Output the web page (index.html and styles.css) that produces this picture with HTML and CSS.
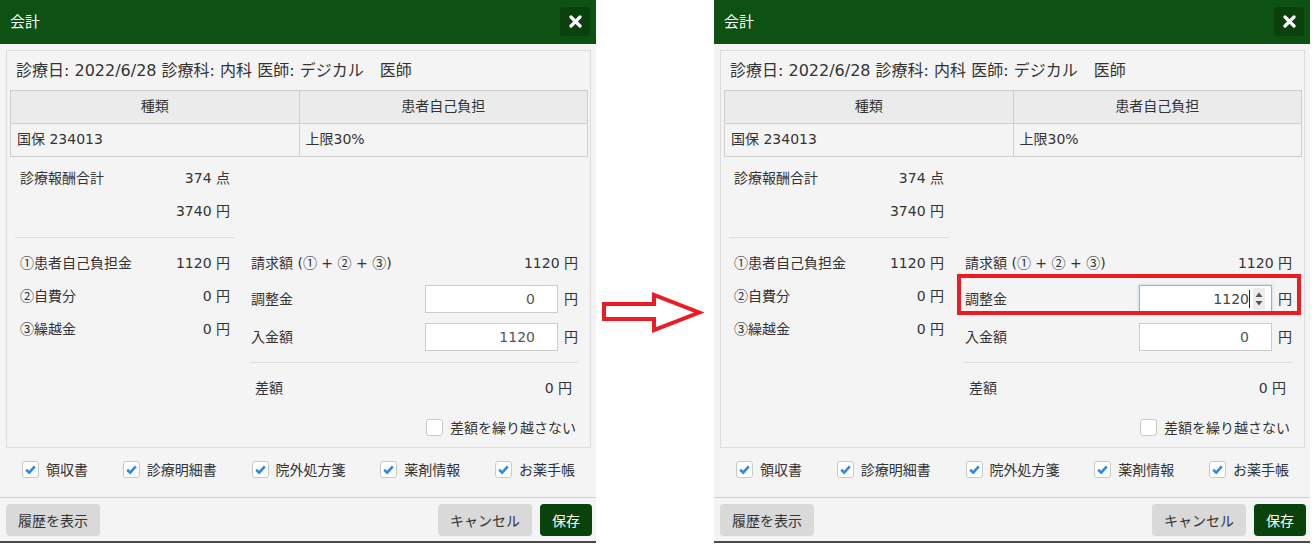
FILE: index.html
```html
<!DOCTYPE html>
<html>
<head>
    <title>会計</title>
    <link rel="stylesheet" href="styles.css">
</head>
<body>
    <div class="page">
        <div class="dialog">
            <div class="dialog-header">
                <span class="dialog-title">会計</span>
                <span class="close-btn"><svg width="13" height="13" viewBox="0 0 13 13"><path d="M2 2 L11 11 M11 2 L2 11" stroke="#fff" stroke-width="3.2" stroke-linecap="round"/></svg></span>
            </div>
            <div class="dialog-body">
                <div class="visit-info">診療日: 2022/6/28 診療科: 内科 医師: デジカル　医師</div>
                <table class="insurance">
                    <tr><th>種類</th><th>患者自己負担</th></tr>
                    <tr><td>国保 234013</td><td>上限30%</td></tr>
                </table>
                <div class="summary">
                    <div class="summary-left">
                        <div class="row"><span>診療報酬合計</span><span>374 点</span></div>
                        <div class="row"><span></span><span>3740 円</span></div>
                        <div class="divider"></div>
                        <div class="row"><span><span class="circ">①</span>患者自己負担金</span><span>1120 円</span></div>
                        <div class="row"><span><span class="circ">②</span>自費分</span><span>0 円</span></div>
                        <div class="row"><span><span class="circ">③</span>繰越金</span><span>0 円</span></div>
                    </div>
                    <div class="summary-right">
                        <div class="row"><span>請求額 (<span class="circ">①</span> + <span class="circ">②</span> + <span class="circ">③</span>)</span><span>1120 円</span></div>
                        <div class="row row-input"><span>調整金</span><span class="amount"><span class="field"><input class="num" type="text" value="0"></span><span class="unit">円</span></span></div>
                        <div class="row row-input2"><span>入金額</span><span class="amount"><span class="field"><input class="num" type="text" value="1120"></span><span class="unit">円</span></span></div>
                        <div class="divider wide"></div>
                        <div class="row diff"><span>差額</span><span>0 円</span></div>
                        <div class="carry"><span class="check"></span><span>差額を繰り越さない</span></div>
                    </div>
                </div>
            </div>
            <div class="print-options">
                <label class="opt"><span class="check checked"><svg width="17" height="17" viewBox="0 0 17 17"><path d="M4.2 8.8 L7.2 11.6 L12.8 5.4" fill="none" stroke="#2e8ae6" stroke-width="2.6"/></svg></span>領収書</label>
                <label class="opt"><span class="check checked"><svg width="17" height="17" viewBox="0 0 17 17"><path d="M4.2 8.8 L7.2 11.6 L12.8 5.4" fill="none" stroke="#2e8ae6" stroke-width="2.6"/></svg></span>診療明細書</label>
                <label class="opt"><span class="check checked"><svg width="17" height="17" viewBox="0 0 17 17"><path d="M4.2 8.8 L7.2 11.6 L12.8 5.4" fill="none" stroke="#2e8ae6" stroke-width="2.6"/></svg></span>院外処方箋</label>
                <label class="opt"><span class="check checked"><svg width="17" height="17" viewBox="0 0 17 17"><path d="M4.2 8.8 L7.2 11.6 L12.8 5.4" fill="none" stroke="#2e8ae6" stroke-width="2.6"/></svg></span>薬剤情報</label>
                <label class="opt"><span class="check checked"><svg width="17" height="17" viewBox="0 0 17 17"><path d="M4.2 8.8 L7.2 11.6 L12.8 5.4" fill="none" stroke="#2e8ae6" stroke-width="2.6"/></svg></span>お薬手帳</label>
            </div>
            <div class="dialog-footer">
                <button class="btn btn-gray">履歴を表示</button>
                <span class="spacer"></span>
                <button class="btn btn-gray">キャンセル</button>
                <button class="btn btn-save">保存</button>
            </div>
        </div>

        <div class="arrow-gap">
            <svg width="104" height="46" viewBox="600 290 104 46"><polygon points="604,304 654,304 654,295 699,312.5 654,330 654,319 604,319" fill="none" stroke="#ed1c24" stroke-width="4" stroke-linejoin="miter"/></svg>
        </div>

        <div class="dialog">
            <div class="dialog-header">
                <span class="dialog-title">会計</span>
                <span class="close-btn"><svg width="13" height="13" viewBox="0 0 13 13"><path d="M2 2 L11 11 M11 2 L2 11" stroke="#fff" stroke-width="3.2" stroke-linecap="round"/></svg></span>
            </div>
            <div class="dialog-body">
                <div class="visit-info">診療日: 2022/6/28 診療科: 内科 医師: デジカル　医師</div>
                <table class="insurance">
                    <tr><th>種類</th><th>患者自己負担</th></tr>
                    <tr><td>国保 234013</td><td>上限30%</td></tr>
                </table>
                <div class="summary">
                    <div class="summary-left">
                        <div class="row"><span>診療報酬合計</span><span>374 点</span></div>
                        <div class="row"><span></span><span>3740 円</span></div>
                        <div class="divider"></div>
                        <div class="row"><span><span class="circ">①</span>患者自己負担金</span><span>1120 円</span></div>
                        <div class="row"><span><span class="circ">②</span>自費分</span><span>0 円</span></div>
                        <div class="row"><span><span class="circ">③</span>繰越金</span><span>0 円</span></div>
                    </div>
                    <div class="summary-right">
                        <div class="row"><span>請求額 (<span class="circ">①</span> + <span class="circ">②</span> + <span class="circ">③</span>)</span><span>1120 円</span></div>
                        <div class="row row-input"><span>調整金</span><span class="amount"><span class="field"><input class="num focused" type="text" value="1120"><span class="caret"></span><span class="spinner"><svg width="10" height="20" viewBox="0 0 10 20"><path d="M1.5 8 L5 3.5 L8.5 8 Z M1.5 12 L5 16.5 L8.5 12 Z" fill="#555"/></svg></span></span><span class="unit">円</span></span></div>
                        <div class="row row-input2"><span>入金額</span><span class="amount"><span class="field"><input class="num" type="text" value="0"></span><span class="unit">円</span></span></div>
                        <div class="divider wide"></div>
                        <div class="row diff"><span>差額</span><span>0 円</span></div>
                        <div class="carry"><span class="check"></span><span>差額を繰り越さない</span></div>
                    </div>
                </div>
            </div>
            <div class="print-options">
                <label class="opt"><span class="check checked"><svg width="17" height="17" viewBox="0 0 17 17"><path d="M4.2 8.8 L7.2 11.6 L12.8 5.4" fill="none" stroke="#2e8ae6" stroke-width="2.6"/></svg></span>領収書</label>
                <label class="opt"><span class="check checked"><svg width="17" height="17" viewBox="0 0 17 17"><path d="M4.2 8.8 L7.2 11.6 L12.8 5.4" fill="none" stroke="#2e8ae6" stroke-width="2.6"/></svg></span>診療明細書</label>
                <label class="opt"><span class="check checked"><svg width="17" height="17" viewBox="0 0 17 17"><path d="M4.2 8.8 L7.2 11.6 L12.8 5.4" fill="none" stroke="#2e8ae6" stroke-width="2.6"/></svg></span>院外処方箋</label>
                <label class="opt"><span class="check checked"><svg width="17" height="17" viewBox="0 0 17 17"><path d="M4.2 8.8 L7.2 11.6 L12.8 5.4" fill="none" stroke="#2e8ae6" stroke-width="2.6"/></svg></span>薬剤情報</label>
                <label class="opt"><span class="check checked"><svg width="17" height="17" viewBox="0 0 17 17"><path d="M4.2 8.8 L7.2 11.6 L12.8 5.4" fill="none" stroke="#2e8ae6" stroke-width="2.6"/></svg></span>お薬手帳</label>
            </div>
            <div class="dialog-footer">
                <button class="btn btn-gray">履歴を表示</button>
                <span class="spacer"></span>
                <button class="btn btn-gray">キャンセル</button>
                <button class="btn btn-save">保存</button>
            </div>
            <div class="highlight"></div>
        </div>
    </div>
</body>
</html>
```

FILE: styles.css
```css
body {
    margin: 0;
    padding: 0;
    background-color: #fff;
    font-family: "DejaVu Sans", "Noto Sans CJK JP", sans-serif;
    font-size: 14px;
    color: #333;
}

.page {
    display: flex;
    align-items: flex-start;
}

.dialog {
    position: relative;
    width: 596px;
    background-color: #f4f4f4;
    border-bottom: 2px solid #4a4a4a;
}

.dialog-header {
    height: 44px;
    background-color: #0e5213;
    display: flex;
    align-items: center;
    justify-content: space-between;
    padding: 0 6px 0 10px;
    box-sizing: border-box;
}

.dialog-title {
    color: #fff;
    font-size: 15px;
    margin-top: -4px;
}

.close-btn {
    width: 30px;
    height: 29px;
    background-color: #0a410c;
    border-radius: 3px;
    display: flex;
    align-items: center;
    justify-content: center;
    margin-top: -1px;
}

.dialog-body {
    margin: 6px 5px 0 6px;
    border: 1px solid #dcdcdc;
    padding: 4px 2px 3px 3px;
}

.visit-info {
    height: 35px;
    line-height: 31px;
    font-size: 16px;
    padding-left: 6px;
}

.circ {
    font-family: "Noto Sans CJK JP", sans-serif;
    line-height: 1;
}

.insurance {
    width: 100%;
    border-collapse: collapse;
    table-layout: fixed;
}

.insurance th,
.insurance td {
    border: 1px solid #cfcfcf;
    height: 30px;
    padding: 0 6px 2px;
    font-weight: normal;
    line-height: 20px;
}

.insurance th {
    background-color: #ebebeb;
    text-align: center;
}

.summary {
    display: grid;
    grid-template-columns: 220px 328px;
    column-gap: 15px;
    padding: 4px 10px 0 5px;
}

.row {
    display: flex;
    justify-content: space-between;
    align-items: center;
    height: 33px;
    line-height: 20px;
}

.summary-left .row {
    padding: 0 5px;
}

.divider {
    border-top: 1px solid #dcdcdc;
    margin: 10px 0 8px;
}

.summary-right {
    padding-top: 85px;
}

.summary-right .row {
    padding-left: 1px;
}

.summary-right .row-input {
    height: 40px;
}

.summary-right .row-input2 {
    height: 36px;
}

.divider.wide {
    margin: 7px 0 8px;
}

.summary-right .diff {
    padding: 0 6px 0 5px;
}

.amount {
    display: flex;
    align-items: center;
}

.field {
    position: relative;
    display: block;
}

.num {
    display: block;
    width: 133px;
    height: 28px;
    box-sizing: border-box;
    border: 1px solid #cccccc;
    background-color: #fff;
    padding: 0 22px 0 6px;
    text-align: right;
    font-family: inherit;
    font-size: 14px;
    color: #555;
    outline: none;
}

.num.focused {
    border-color: #86b7e6;
    box-shadow: 0 0 3px rgba(102, 165, 230, 0.45);
    color: #444;
}

.caret {
    position: absolute;
    right: 22px;
    top: 5px;
    width: 1px;
    height: 18px;
    background-color: #222;
}

.spinner {
    position: absolute;
    right: 7px;
    top: 3px;
    width: 12px;
    height: 22px;
    background-color: #ececec;
    display: flex;
    align-items: center;
    justify-content: center;
}

.unit {
    margin-left: 6px;
}

.carry {
    display: flex;
    justify-content: flex-end;
    align-items: center;
    height: 34px;
    margin-top: 6px;
    padding-right: 2px;
}

.check {
    width: 17px;
    height: 17px;
    box-sizing: border-box;
    border: 1px solid #c9c9c9;
    border-radius: 3px;
    background-color: #fff;
    margin-right: 7px;
    display: flex;
    align-items: center;
    justify-content: center;
}

.check svg {
    flex: none;
}

.print-options {
    display: flex;
    justify-content: space-between;
    height: 49px;
    box-sizing: border-box;
    padding: 11px 21px 0 22px;
}

.opt {
    display: flex;
    align-items: center;
    height: 20px;
}

.dialog-footer {
    display: flex;
    align-items: center;
    border-top: 1px solid #cfcfcf;
    padding: 6px 4px 5px 6px;
}

.spacer {
    flex: 1;
}

.btn {
    height: 32px;
    padding: 0 12px;
    border: none;
    border-radius: 4px;
    font-family: inherit;
    font-size: 14px;
}

.btn-gray {
    background-color: #d9d9d9;
    color: #333;
}

.btn-save {
    background-color: #0a420b;
    color: #fff;
    margin-left: 8px;
}

.arrow-gap {
    width: 118px;
    flex: none;
    padding-top: 290px;
    padding-left: 4px;
    box-sizing: border-box;
}

.arrow-gap svg {
    display: block;
}

.highlight {
    position: absolute;
    left: 243px;
    top: 274px;
    width: 344px;
    height: 41px;
    box-sizing: border-box;
    border: 4px solid #ed1c24;
}
```
